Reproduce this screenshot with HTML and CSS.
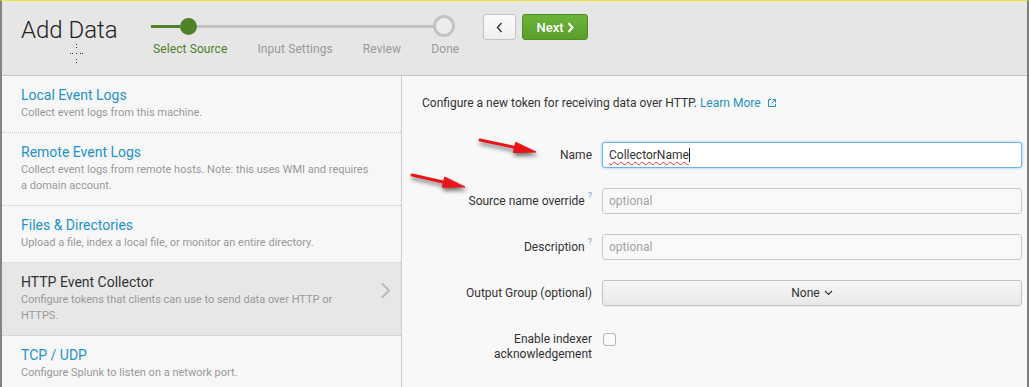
FILE: index.html
```html
<!DOCTYPE html>
<html>
<head>
<meta charset="utf-8">
<link rel="stylesheet" href="styles.css">
</head>
<body>
<div class="frame">
  <header class="hdr">
    <h1 class="title">Add Data</h1>
    <svg class="movecursor" width="14" height="19" viewBox="0 0 14 19"><g fill="#333"><rect x="6" y="0" width="1" height="1"/><rect x="6" y="3" width="1" height="1"/><rect x="0" y="9" width="1" height="1"/><rect x="2" y="9" width="1" height="1"/><rect x="6" y="9" width="1" height="1"/><rect x="10" y="9" width="1" height="1"/><rect x="12" y="9" width="1" height="1"/><rect x="6" y="15" width="1" height="1"/><rect x="6" y="18" width="1" height="1"/></g></svg>
    <div class="steps">
      <div class="track">
        <span class="seg seg-done"></span>
        <span class="dot"></span>
        <span class="seg seg-todo"></span>
        <span class="ring"></span>
      </div>
      <div class="labels">
        <span class="active">Select Source</span>
        <span>Input Settings</span>
        <span>Review</span>
        <span>Done</span>
      </div>
    </div>
    <div class="navbtns">
      <button class="btn back"><svg width="7" height="11" viewBox="0 0 7 11"><polyline points="5.5,1 1.5,5.5 5.5,10" fill="none" stroke="#333" stroke-width="1.4"/></svg></button>
      <button class="btn next">Next <svg width="7" height="11" viewBox="0 0 7 11"><polyline points="1.5,1 5.5,5.5 1.5,10" fill="none" stroke="#fff" stroke-width="2"/></svg></button>
    </div>
  </header>
  <main class="body">
    <nav class="sources">
      <div class="src">
        <div class="txt">
          <h3>Local Event Logs</h3>
          <p>Collect event logs from this machine.</p>
        </div>
      </div>
      <div class="src">
        <div class="txt">
          <h3>Remote Event Logs</h3>
          <p>Collect event logs from remote hosts. Note: this uses WMI and requires a domain account.</p>
        </div>
      </div>
      <div class="src">
        <div class="txt">
          <h3>Files &amp; Directories</h3>
          <p>Upload a file, index a local file, or monitor an entire directory.</p>
        </div>
      </div>
      <div class="src selected">
        <div class="txt">
          <h3>HTTP Event Collector</h3>
          <p>Configure tokens that clients can use to send data over HTTP or HTTPS.</p>
        </div>
        <svg class="chev" width="11" height="17" viewBox="0 0 11 17"><polyline points="2,1.5 9,8.5 2,15.5" fill="none" stroke="#b8b8b8" stroke-width="2"/></svg>
      </div>
      <div class="src last">
        <div class="txt">
          <h3>TCP / UDP</h3>
          <p>Configure Splunk to listen on a network port.</p>
        </div>
      </div>
    </nav>
    <section class="config">
      <p class="intro">Configure a new token for receiving data over HTTP. <a class="learn">Learn More <svg width="10" height="10" viewBox="0 0 10 10"><path d="M4 1.5H1.5v7h7V6" fill="none" stroke="#1e93c6"/><path d="M5.5 1.5h3v3M8.5 1.5L4.5 5.5" fill="none" stroke="#1e93c6"/></svg></a></p>
      <div class="form">
        <div class="row">
          <label class="lbl">Name</label>
          <div class="input focus"><span class="typed">CollectorName</span><span class="caret"></span></div>
        </div>
        <div class="row">
          <label class="lbl">Source name override<span class="q">?</span></label>
          <div class="input"><span class="ph">optional</span></div>
        </div>
        <div class="row">
          <label class="lbl">Description<span class="q">?</span></label>
          <div class="input"><span class="ph">optional</span></div>
        </div>
        <div class="row">
          <label class="lbl">Output Group (optional)</label>
          <div class="select">None <svg width="9" height="6" viewBox="0 0 9 6"><polyline points="1,1 4.5,4.5 8,1" fill="none" stroke="#333" stroke-width="1.1"/></svg></div>
        </div>
        <div class="row row-top">
          <label class="lbl lbl-multi">Enable indexer<br>acknowledgement</label>
          <div><span class="check"></span></div>
        </div>
      </div>
    </section>
    <svg class="arrows" width="145" height="62" viewBox="0 0 145 62">
      <g fill="#e8141a" stroke="#e8141a">
        <line x1="77" y1="5" x2="112" y2="12.4" stroke-width="3" stroke-linecap="round"/>
        <polygon points="133,17 110.4,17.6 112.6,7.3" stroke-width="1"/>
        <line x1="9" y1="40" x2="41" y2="47.2" stroke-width="3" stroke-linecap="round"/>
        <polygon points="62,52 39.3,52.3 41.7,42" stroke-width="1"/>
      </g>
    </svg>
  </main>
</div>
</body>
</html>
```

FILE: styles.css
```css
* { box-sizing: border-box; }
html, body { margin: 0; padding: 0; }
body {
  width: 1029px;
  height: 387px;
  overflow: hidden;
  font-family: Roboto, "Liberation Sans", sans-serif;
  color: #333;
  background: #f7f7f7;
}
.frame {
  width: 1029px;
  height: 387px;
  border-top: 1px solid #f0e62e;
  border-left: 2px solid #858585;
  border-right: 2px solid #7c7c7c;
  border-bottom: 2px solid #7c7c7c;
  display: flex;
  flex-direction: column;
}
.hdr {
  position: relative;
  height: 75px;
  flex: none;
  background: #e6e6e6;
  border-bottom: 1px solid #c4c4c4;
  display: flex;
  align-items: flex-start;
  padding-left: 19px;
}
.title {
  margin: 15px 0 0 0;
  font-size: 24px;
  line-height: 28px;
  font-weight: 300;
  color: #222;
  width: 98px;
  white-space: nowrap;
}
.movecursor {
  position: absolute;
  left: 68px;
  top: 43px;
}
.steps {
  width: 304px;
  margin-left: 32px;
  margin-top: 14px;
}
.track {
  display: flex;
  align-items: center;
  height: 22px;
}
.seg { height: 3px; }
.seg-done { width: 29px; background: #4f8229; }
.seg-todo { flex: 1; background: #c3c3c3; }
.dot {
  width: 17px;
  height: 17px;
  border-radius: 50%;
  background: #4f8229;
}
.ring {
  width: 22px;
  height: 22px;
  border-radius: 50%;
  border: 3px solid #c3c3c3;
  background: #ececec;
}
.labels {
  display: flex;
  gap: 30px;
  margin-left: 2px;
  margin-top: 5px;
  font-size: 12px;
  line-height: 14px;
  color: #999;
  white-space: nowrap;
  letter-spacing: 0.1px;
}
.labels .active { color: #4f7f2b; }
.navbtns {
  display: flex;
  gap: 6px;
  margin-left: 28px;
  margin-top: 13px;
}
.btn {
  height: 26px;
  border-radius: 3px;
  font-family: inherit;
  display: flex;
  align-items: center;
  justify-content: center;
  padding: 0;
  cursor: pointer;
}
.back {
  width: 33px;
  border: 1px solid #c3c3c3;
  background: linear-gradient(#fbfbfb, #efefef);
}
.next {
  width: 66px;
  border: 1px solid #4f8f22;
  background: linear-gradient(#6cb33a, #5a9e2c);
  color: #fff;
  font-size: 13px;
  font-weight: 500;
  gap: 3px;
}
.body {
  position: relative;
  flex: 1;
  display: flex;
  background: #f8f8f8;
}
.sources {
  width: 400px;
  flex: none;
  border-right: 1px solid #cdcdcd;
  background: #f7f7f7;
}
.src {
  display: flex;
  align-items: flex-start;
  padding: 10px 10px 11px 19px;
  border-bottom: 1px dotted #c6c6c6;
}
.src.last { border-bottom: none; }
.src.selected { background: #e7e7e7; }
.txt { width: 348px; }
.src h3 {
  margin: 0 0 1px 0;
  font-size: 14px;
  line-height: 18px;
  font-weight: 400;
  color: #1e93c6;
}
.src.selected h3 { color: #333; }
.src p {
  margin: 0;
  font-size: 11px;
  line-height: 16px;
  color: #999;
}
.chev {
  margin-left: auto;
  margin-top: 9px;
}
.config {
  flex: 1;
  padding: 19px 5px 0 0;
}
.intro {
  margin: 0 0 31px 20px;
  font-size: 12px;
  line-height: 16px;
  color: #333;
}
.learn {
  color: #1e93c6;
  text-decoration: none;
}
.learn svg { margin-left: 3px; vertical-align: -1px; }
.row {
  display: grid;
  grid-template-columns: 190px 1fr;
  column-gap: 10px;
  align-items: center;
  margin-bottom: 20px;
}
.row-top { align-items: start; }
.lbl {
  text-align: right;
  font-size: 12px;
  line-height: 16px;
  color: #333;
}
.lbl-multi {
  line-height: 15px;
  padding-top: 6px;
}
.q {
  font-size: 9px;
  color: #7fa6c8;
  position: relative;
  top: -6px;
  margin-left: 3px;
}
.input {
  height: 26px;
  border: 1px solid #c9c9c9;
  border-radius: 3px;
  background: #f9f9f9;
  padding: 0 6px;
  font-size: 12px;
  line-height: 24px;
  display: flex;
  align-items: center;
}
.ph { color: #a3a3a3; }
.input.focus {
  background: #fff;
  border-color: #6fb3e6;
  box-shadow: 0 0 3px rgba(102, 175, 233, 0.7);
}
.typed {
  color: #333;
  text-decoration: underline wavy #e03030;
  text-decoration-thickness: 1px;
  text-underline-offset: 2px;
}
.caret {
  display: inline-block;
  width: 1px;
  height: 14px;
  background: #222;
}
.select {
  height: 26px;
  border: 1px solid #c3c3c3;
  border-radius: 3px;
  background: linear-gradient(#f7f7f7, #e8e8e8);
  box-shadow: 0 1px 1px rgba(0,0,0,0.06);
  display: flex;
  align-items: center;
  justify-content: center;
  gap: 4px;
  font-size: 12px;
  color: #333;
}
.check {
  display: block;
  width: 13px;
  height: 13px;
  margin-top: 7px;
  margin-left: 1px;
  border: 1px solid #b5b5b5;
  border-radius: 3px;
  background: #fafafa;
}
.arrows {
  position: absolute;
  left: 401px;
  top: 59px;
  filter: drop-shadow(1px 3px 2px rgba(0,0,0,0.55));
}
```
